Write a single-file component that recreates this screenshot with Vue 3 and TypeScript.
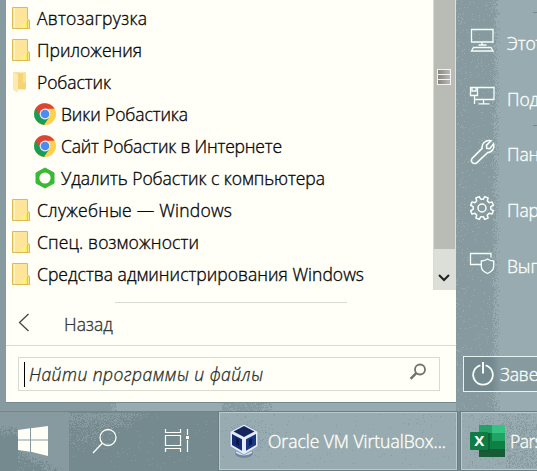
<script setup lang="ts">
interface MenuEntry {
  label: string
  icon: 'folder' | 'open' | 'chrome' | 'hex'
  width: number
}

const entries: MenuEntry[] = [
  { label: 'Автозагрузка', icon: 'folder', width: 110 },
  { label: 'Приложения', icon: 'folder', width: 105 },
  { label: 'Робастик', icon: 'open', width: 74 },
  { label: 'Вики Робастика', icon: 'chrome', width: 127 },
  { label: 'Сайт Робастик в Интернете', icon: 'chrome', width: 221 },
  { label: 'Удалить Робастик с компьютера', icon: 'hex', width: 264 },
  { label: 'Служебные — Windows', icon: 'folder', width: 195 },
  { label: 'Спец. возможности', icon: 'folder', width: 162 },
  { label: 'Средства администрирования Windows', icon: 'folder', width: 327 },
]

const places = [
  { label: 'Этот компьютер', icon: 'pc' },
  { label: 'Подключения', icon: 'network' },
  { label: 'Панель управления', icon: 'wrench' },
  { label: 'Параметры', icon: 'gear' },
  { label: 'Выполнить', icon: 'shield' },
]

let seed = 7
function random(): number {
  seed = (seed * 16807) % 2147483647
  return seed / 2147483647
}

// One-pixel grain; density is a probability for every pixel of the area.
function grain(x: number, y: number, w: number, h: number, density: (x: number, y: number) => number): string {
  let d = ''
  for (let j = y; j < y + h; j++) {
    for (let i = x; i < x + w; i++) {
      if (random() < density(i, j)) d += `M${i} ${j}h1v1h-1z`
    }
  }
  return d
}

const paneGrain = grain(456, 0, 44, 411, (x) => (x > 491 ? (x - 490) / 10 : x < 466 ? 0.06 : 0.03))
const edgeGrain = grain(110, 402, 8, 9, (x) => (x - 109) / 9)
const barGrain = grain(0, 414, 69, 57, (x, y) => {
  if (x < 18) return Math.max(0, Math.min(1, (y - 424) / 14))
  return Math.max(0, Math.min(0.9, (y - 446 - (x - 18) * 0.5) / 14))
})
const barLight = grain(69, 413, 149, 57, (x, y) => {
  const top = y < 428 ? 0.85 - Math.max(0, x - 115) / 50 - (y - 413) / 30 : 0
  const side = 0.3 - Math.hypot((x - 88) / 120, (y - 434) / 60)
  return Math.max(0.01, top, side)
})
const gapGrain = grain(222, 402, 50, 9, (x) => (x < 262 ? 0.8 : 0.4))
const taskGrain = grain(221, 414, 235, 54, (x, y) => Math.max(0.01, 0.24 - Math.hypot((x - 252) / 150, (y - 437) / 85)))
const excelGrain = grain(463, 414, 74, 54, (x, y) => (x > 480 && y < 424 ? 0.24 : x > 505 ? 0.38 : 0.06))

const teeth = Array.from({ length: 8 }, (_, i) => i * 45)
function gearPath(): string {
  return teeth
    .map((deg, i) => {
      const pts = [[-14, 8.9], [-9, 11.7], [9, 11.7], [14, 8.9]].map(([a, r]) => {
        const t = ((deg + 22.5 + a) * Math.PI) / 180
        return `${(13 + r * Math.sin(t)).toFixed(2)} ${(13 - r * Math.cos(t)).toFixed(2)}`
      })
      return `${i ? 'L' : 'M'}${pts.join('L')}`
    })
    .join('') + 'Z'
}
const gear = gearPath()
</script>

<template>
  <div class="screen">
    <svg class="backdrop" width="537" height="471" shape-rendering="crispEdges" aria-hidden="true">
      <rect width="537" height="471" fill="#869a9f" />
      <rect x="500" width="37" height="411" fill="#98abb0" />
      <rect x="118" y="402" width="338" height="9" fill="#98abb0" />
      <path :d="gapGrain" fill="#869a9f" />
      <path :d="paneGrain + edgeGrain" fill="#98abb0" />
      <path d="M533 12.5h4M533 125.5h4" stroke="#748a8f" />
      <rect y="411" width="537" height="60" fill="#748a8f" />
      <rect y="412" width="69" height="59" fill="#869a9f" />
      <path :d="barGrain" fill="#748a8f" />
      <path :d="barLight" fill="#869a9f" />
      <rect x="219" y="412" width="238" height="58" fill="#98abb0" />
      <rect x="461" y="412" width="76" height="58" fill="#98abb0" />
      <path :d="taskGrain + excelGrain" fill="#869a9f" />
    </svg>

    <div class="desktop">
      <section class="menu">
        <div class="upper">
          <ul class="list">
            <li v-for="e in entries" :key="e.label" :class="{ child: e.icon === 'chrome' || e.icon === 'hex' }">
              <svg v-if="e.icon === 'folder'" class="icon" width="24" height="24" viewBox="0 0 24 24">
                <path d="M2.5 1.5h15v11.7l2 2.3v7h-17z" fill="#fde69a" stroke="#dfba4d" />
                <path d="M9 22l8.5-9v9z" fill="#fff080" />
                <path d="M4.5 2.5v19" stroke="#fff3c8" />
                <path d="M17.3 22.5v-7.5q1.5-3 2.2 0v7.5z" fill="#fbe58c" stroke="#dfba4d" />
              </svg>
              <svg v-else-if="e.icon === 'open'" class="icon" width="24" height="24" viewBox="0 0 24 24">
                <path d="M7 2.5h9v17H7z" fill="#f5d478" />
                <path d="M13 2.5h3v10h-3z" fill="#ffe08a" />
                <path d="M3 2l5 3.5v17.3l-5-3z" fill="#ffe9b0" />
                <path d="M3 2h6l-1 3.5z" fill="#f8dfa0" />
              </svg>
              <svg v-else-if="e.icon === 'chrome'" class="icon" width="24" height="24" viewBox="0 0 24 24">
                <circle cx="12" cy="12" r="11" fill="#ffd04b" />
                <path d="M12 12L2.5 6.5A11 11 0 0 0 11 22.9L17 14z" fill="#169c5b" />
                <path d="M2.5 6.5A11 11 0 0 1 21.5 6.8H12L7 14z" fill="#db4437" />
                <circle cx="12" cy="12" r="5.4" fill="#f4f4ee" />
                <circle cx="12" cy="12" r="4.3" fill="#4b8bf5" />
              </svg>
              <svg v-else class="icon" width="24" height="24" viewBox="0 0 24 24">
                <path d="M12 2L21 6.9v10.2L12 22 3 17.1V6.9z" fill="#39b934" stroke="#39b934" stroke-linejoin="round" />
                <circle cx="12" cy="12" r="5.6" fill="#fffff8" />
              </svg>
              <svg class="label" width="350" height="28">
                <text x="0" y="21" :textLength="e.width">{{ e.label }}</text>
              </svg>
            </li>
          </ul>
          <div class="scroll">
            <div class="thumb"><i v-for="n in 3" :key="n"></i></div>
            <div class="down">
              <svg width="12" height="8" viewBox="0 0 12 8"><path d="M1 1l5 5 5-5" fill="none" stroke="#222" stroke-width="2" /></svg>
            </div>
          </div>
        </div>
        <div class="rule"></div>
        <div class="back">
          <svg width="12" height="19" viewBox="0 0 12 19"><path d="M10.5 1L1.5 9.5l9 8.5" fill="none" stroke="#424842" stroke-width="1.3" /></svg>
          <span>Назад</span>
        </div>
        <div class="search-area">
          <div class="search">
            <b class="caret"></b>
            <svg class="hint" width="260" height="30"><text x="0" y="22" textLength="234">Найти программы и файлы</text></svg>
            <svg class="lens" width="18" height="18" viewBox="0 0 18 18"><g fill="none" stroke="#6f746e"><circle cx="11" cy="6.5" r="5" stroke-width="1.8" /><path d="M7.2 10.2L1.6 15.8" stroke-width="2.6" /></g></svg>
          </div>
        </div>
      </section>

      <aside class="places">
        <div v-for="p in places" :key="p.label" class="place">
          <svg width="26" height="26" viewBox="0 0 26 26" fill="none" stroke="#f8fffc" stroke-width="1.3">
            <template v-if="p.icon === 'pc'"><path d="M2.5 2.5h21.5v12.5h-21.5zM13 15v3M9.5 18h8M4.5 20.5h17.5l2 3.5H2.5z" /></template>
            <template v-else-if="p.icon === 'network'"><path d="M8.5 4.5H25v12H5.5v-4M14.5 16.5v4M9.5 20.8h11M5.5 12.5V21M1.5 4.5h7v8h-7zM3 5v3h4V5" /></template>
            <path v-else-if="p.icon === 'wrench'" d="M22 1.8l-4.6 4.6 .4 2.9 2.9.4L24.5 5c1.4 4.1-1.3 8.5-6.1 8.7L8 23.6c-1.7 1.6-4 1-5-.5-1-1.4-.6-3.2.6-4.3L13.1 9.4C12.4 4.5 16.8.4 22 1.8z" stroke-width="1.6" />
            <template v-else-if="p.icon === 'gear'"><path :d="gear" stroke-width="1.5" stroke-linejoin="round" /><circle cx="13" cy="13" r="4" stroke-width="1.5" /></template>
            <template v-else><path d="M12 13.5H1.5V2.5h20.5v4" /><path d="M18.5 8c2 1.6 4 2 6.2 2v5.5c0 3-2.7 5.4-6.2 7-3.5-1.6-6.2-4-6.2-7V10c2.2 0 4.2-.4 6.2-2z" /></template>
          </svg>
          <span>{{ p.label }}</span>
        </div>
        <div class="power">
          <svg width="24" height="26" viewBox="0 0 24 26" fill="none" stroke="#f8fffc" stroke-width="2"><path d="M9.4 4.4a9.8 9.8 0 1 0 5.2 0" stroke-width="1.8" /><path d="M12 1v11.5" /></svg>
          <span>Завершение работы</span>
        </div>
      </aside>
    </div>

    <footer class="taskbar">
      <div class="start">
        <svg width="32" height="32" viewBox="0 0 32 32" fill="#fffff8"><path d="M1 5l12-1.7v11.2H1zM14 3.2L31 1v13.5H14zM1 15.5h12v11.2L1 25zM14 15.5h17V31l-17-4.2z" /></svg>
      </div>
      <div class="tool find">
        <svg width="28" height="28" viewBox="0 0 28 28" fill="none" stroke="#fffff8" stroke-width="1.3"><circle cx="17" cy="10.5" r="8" /><path d="M11.3 16.3L2 26" /></svg>
      </div>
      <div class="tool">
        <svg width="26" height="26" viewBox="0 0 26 26" fill="none" stroke="#fffff8" stroke-width="1.2"><path d="M1.5 1v3.5h15V1M1.5 7.5h15v10h-15zM1.5 24v-3.5h15V24M23.5 1v6M23.5 12v12" /><path d="M22 8h3v3h-3z" fill="#fffff8" stroke="none" /></svg>
      </div>
      <div class="task oracle">
        <svg width="32" height="38" viewBox="0 0 32 38">
          <ellipse cx="16" cy="31" rx="9" ry="5" fill="#71859c" /><path d="M8 30q8 5 16 0" fill="none" stroke="#d7e3ee" stroke-width="2" />
          <path d="M16 2L30 9.5v15L16 33 2 24.5v-15z" fill="#e5ecf5" stroke="#8d9dbd" />
          <path d="M16 4L26.5 9.5 16 15 5.5 9.5z" fill="#15265f" /><path d="M4 12l10 5.3v11.5L4 23z" fill="#132c75" /><path d="M28 12l-10 5.3v11.5L28 23z" fill="#193781" />
          <path d="M8 16l3 2v6l-3-2zM24 16l-3 2v6l3-2z" fill="#0b1845" />
        </svg>
        <svg class="caption" width="182" height="30"><text x="0" y="22" textLength="178">Oracle VM VirtualBox...</text></svg>
      </div>
      <div class="task excel">
        <svg width="36" height="34" viewBox="0 0 36 34">
          <path d="M9 1h13v9H9z" fill="#22a365" /><path d="M22 1h13v9H22z" fill="#34c481" /><path d="M9 9h13v8H9z" fill="#107c41" /><path d="M22 9h13v8H22z" fill="#21a366" /><path d="M9 17h26v8H9z" fill="#0d8044" /><path d="M9 25h26v8H9z" fill="#185c37" /><path d="M9 9h11v19H9z" fill="#0b5630" opacity=".6" />
          <rect y="8" width="18" height="18" rx="1" fill="#107c41" /><text class="x-mark" x="4.2" y="22">X</text>
        </svg>
        <span>Parser</span>
      </div>
    </footer>
  </div>
</template>

<style>
body { overflow: hidden; }
</style>

<style scoped>
.screen { position: relative; display: flex; flex-direction: column; width: 537px; height: 471px; overflow: hidden; font: 300 17.5px/28px "Open Sans", "Noto Sans", sans-serif; color: #111; }
.backdrop { position: absolute; inset: 0; }
.desktop { position: relative; display: flex; height: 411px; flex: none; padding-left: 6px; box-sizing: border-box; }
.menu { width: 450px; height: 403px; flex: none; background: #fffff8; border-bottom: 1px solid #748a8f; box-sizing: border-box; }
.upper { display: flex; height: 290px; }
.list { flex: 1; margin: 0; padding: 2px 0 0 4px; list-style: none; }
.list li { display: flex; align-items: center; height: 32px; gap: 3px; }
.list .child { padding-left: 23px; gap: 4px; }
.icon { flex: none; }
.label { flex: none; overflow: visible; }
.label text { fill: #080808; stroke: #080808; stroke-width: .35px; }
.scroll { display: flex; flex-direction: column; width: 23px; flex: none; background: #b9bcb4; border-left: 1px solid #d9dcd3; border-right: 1px solid #dce2da; box-sizing: border-box; }
.thumb { display: flex; flex-direction: column; width: 14px; height: 180px; padding-top: 69px; margin-left: 3px; }
.thumb i { width: 12px; height: 4px; border: 1px solid #f4f0f5; border-bottom: 0; background: linear-gradient(90deg, #85877f, #b8b9b4); }
.thumb i:last-child { border-bottom: 1px solid #f4f0f5; }
.down { display: flex; justify-content: center; align-items: center; height: 41px; padding: 17px 2px 0 0; box-sizing: border-box; background: #dbdfd7; }
.rule { width: 232px; height: 1px; margin: 12px 0 0 109px; background: #d7dcd3; }
.back { display: flex; align-items: center; height: 42px; padding-left: 13px; border-bottom: 1px solid #d7dcd3; gap: 33px; color: #343934; }
.back svg { margin: -3px 0 0 -1px; }
.back span { padding-left: 1px; letter-spacing: .05px; -webkit-text-stroke: .35px #343934; }
.search-area { display: flex; padding: 11px 16px 11px 12px; }
.search { display: flex; align-items: center; width: 422px; height: 34px; border: 1px solid #d7dcd3; box-sizing: border-box; padding: 0 12px 0 5px; }
.caret { width: 1px; height: 25px; background: #000; }
.hint { margin-left: 4px; overflow: visible; }
.hint text { font-style: italic; fill: #282d27; stroke: #282d27; stroke-width: .3px; }
.lens { margin: -4px 0 0 auto; }
.places { flex: 1; padding-top: 15px; overflow: hidden; color: #fafffc; }
.place { display: flex; align-items: center; height: 55.8px; padding-left: 14px; gap: 11px; white-space: nowrap; }
.place svg, .power svg { flex: none; }
.place svg { margin: -5px 0 0 -1px; }
.place span { padding-left: 1px; letter-spacing: -.1px; }
.place span, .power span, .excel span { -webkit-text-stroke: .35px #fafffc; }
.power { display: flex; align-items: center; height: 36px; margin: 62px 0 0 7px; border: 1px solid #e5f4f1; border-right: 0; box-sizing: border-box; padding-left: 7px; gap: 5px; white-space: nowrap; background: linear-gradient(90deg, #748a8f 28px, #869a9f 36px); letter-spacing: -.1px; }
.taskbar { position: relative; display: flex; height: 60px; flex: none; border-top: 1px solid #70868b; box-sizing: border-box; color: #fffff8; }
.start, .tool { display: flex; align-items: center; flex: none; height: 57px; }
.start { width: 69px; padding-left: 17px; box-sizing: border-box; }
.find { width: 95px; padding-left: 22px; box-sizing: border-box; }
.find + .tool { width: 54px; }
.task { display: flex; align-items: center; height: 58px; box-sizing: border-box; border: 1px solid #b8cbce; outline: 1px solid #697f84; overflow: hidden; }
.oracle { width: 238px; flex: none; padding-left: 8px; gap: 8px; margin-left: 1px; }
.caption { overflow: visible; }
.caption text { fill: #fffff8; stroke: #fffff8; stroke-width: .35px; }
.excel { flex: 1; min-width: 0; margin-left: 4px; border-right: 0; padding-left: 8px; gap: 4px; white-space: nowrap; letter-spacing: -.5px; }
.excel svg { flex: none; }
.x-mark { font: bold 15px "Open Sans", sans-serif; fill: #fff; letter-spacing: 0; }
</style>
